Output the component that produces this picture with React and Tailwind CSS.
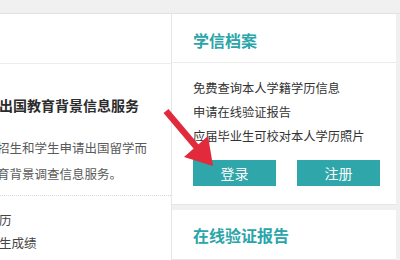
import React from 'react';

const FONT = { fontFamily: '"Noto Sans CJK SC", "Noto Sans", sans-serif' };

const Arrow = () => (
  <svg className="absolute left-0 top-0 pointer-events-none" width="400" height="260" viewBox="0 0 400 260">
    <line x1="166" y1="111" x2="199" y2="150" stroke="#e12a3c" strokeWidth="6.5" strokeLinecap="butt" />
    <polygon points="213,166 184,157 208,136" fill="#e12a3c" />
  </svg>
);

export default function App() {
  return (
    <div className="relative w-[400px] h-[260px] overflow-hidden bg-[#f0f0f0]" style={FONT}>
      <div className="h-[14px] border-b border-[#e2e2e2]" />
      <div className="flex">
        {/* left panel, clipped on the left */}
        <div className="w-[172px] h-[246px] bg-white border-r border-[#e6e6e6] overflow-hidden">
          <div className="h-[50px] border-b border-[#ececec]" />
          <div className="mt-[31px] -ml-px whitespace-nowrap text-[14px] leading-[20px] font-bold text-[#2b2b2b]">
            出国教育背景信息服务
          </div>
          <div className="mt-[20px] -ml-[3px] whitespace-nowrap text-[12.5px] leading-[26px] text-[#5a5a5a]">
            <div>招生和学生申请出国留学而</div>
            <div>育背景调查信息服务。</div>
          </div>
          <div className="mt-[8px] border-t border-dotted border-[#d6d6d6]" />
          <div className="mt-[12px] -ml-px whitespace-nowrap text-[12.5px] leading-[23px] text-[#444]">
            <div>历</div>
            <div>生成绩</div>
          </div>
        </div>

        {/* right column */}
        <div className="w-[224px] flex flex-col gap-[5px]">
          <div className="bg-white border-b border-[#e6e6e6]">
            <div className="h-[49px] border-b border-[#ececec] pl-[21px] pt-[18px]">
              <div className="text-[16px] leading-[16px] font-bold text-[#2aa5a9]">学信档案</div>
            </div>
            <div className="pl-[21px] pt-[13px] pb-[18px]">
              <div className="text-[12.25px] leading-[24px] text-[#333] whitespace-nowrap">
                <div>免费查询本人学籍学历信息</div>
                <div>申请在线验证报告</div>
                <div>应届毕业生可校对本人学历照片</div>
              </div>
              <div className="mt-[12px] flex gap-[21px]">
                <button className="w-[83px] h-[26px] bg-[#2ea6aa] text-white text-[14px]">登录</button>
                <button className="w-[83px] h-[26px] bg-[#2ea6aa] text-white text-[14px]">注册</button>
              </div>
            </div>
          </div>
          <div className="bg-white h-[50px] border-b border-[#e6e6e6] pl-[21px] pt-[17px]">
            <div className="text-[16px] leading-[16px] font-bold text-[#2aa5a9]">在线验证报告</div>
          </div>
        </div>
      </div>
      <Arrow />
    </div>
  );
}
